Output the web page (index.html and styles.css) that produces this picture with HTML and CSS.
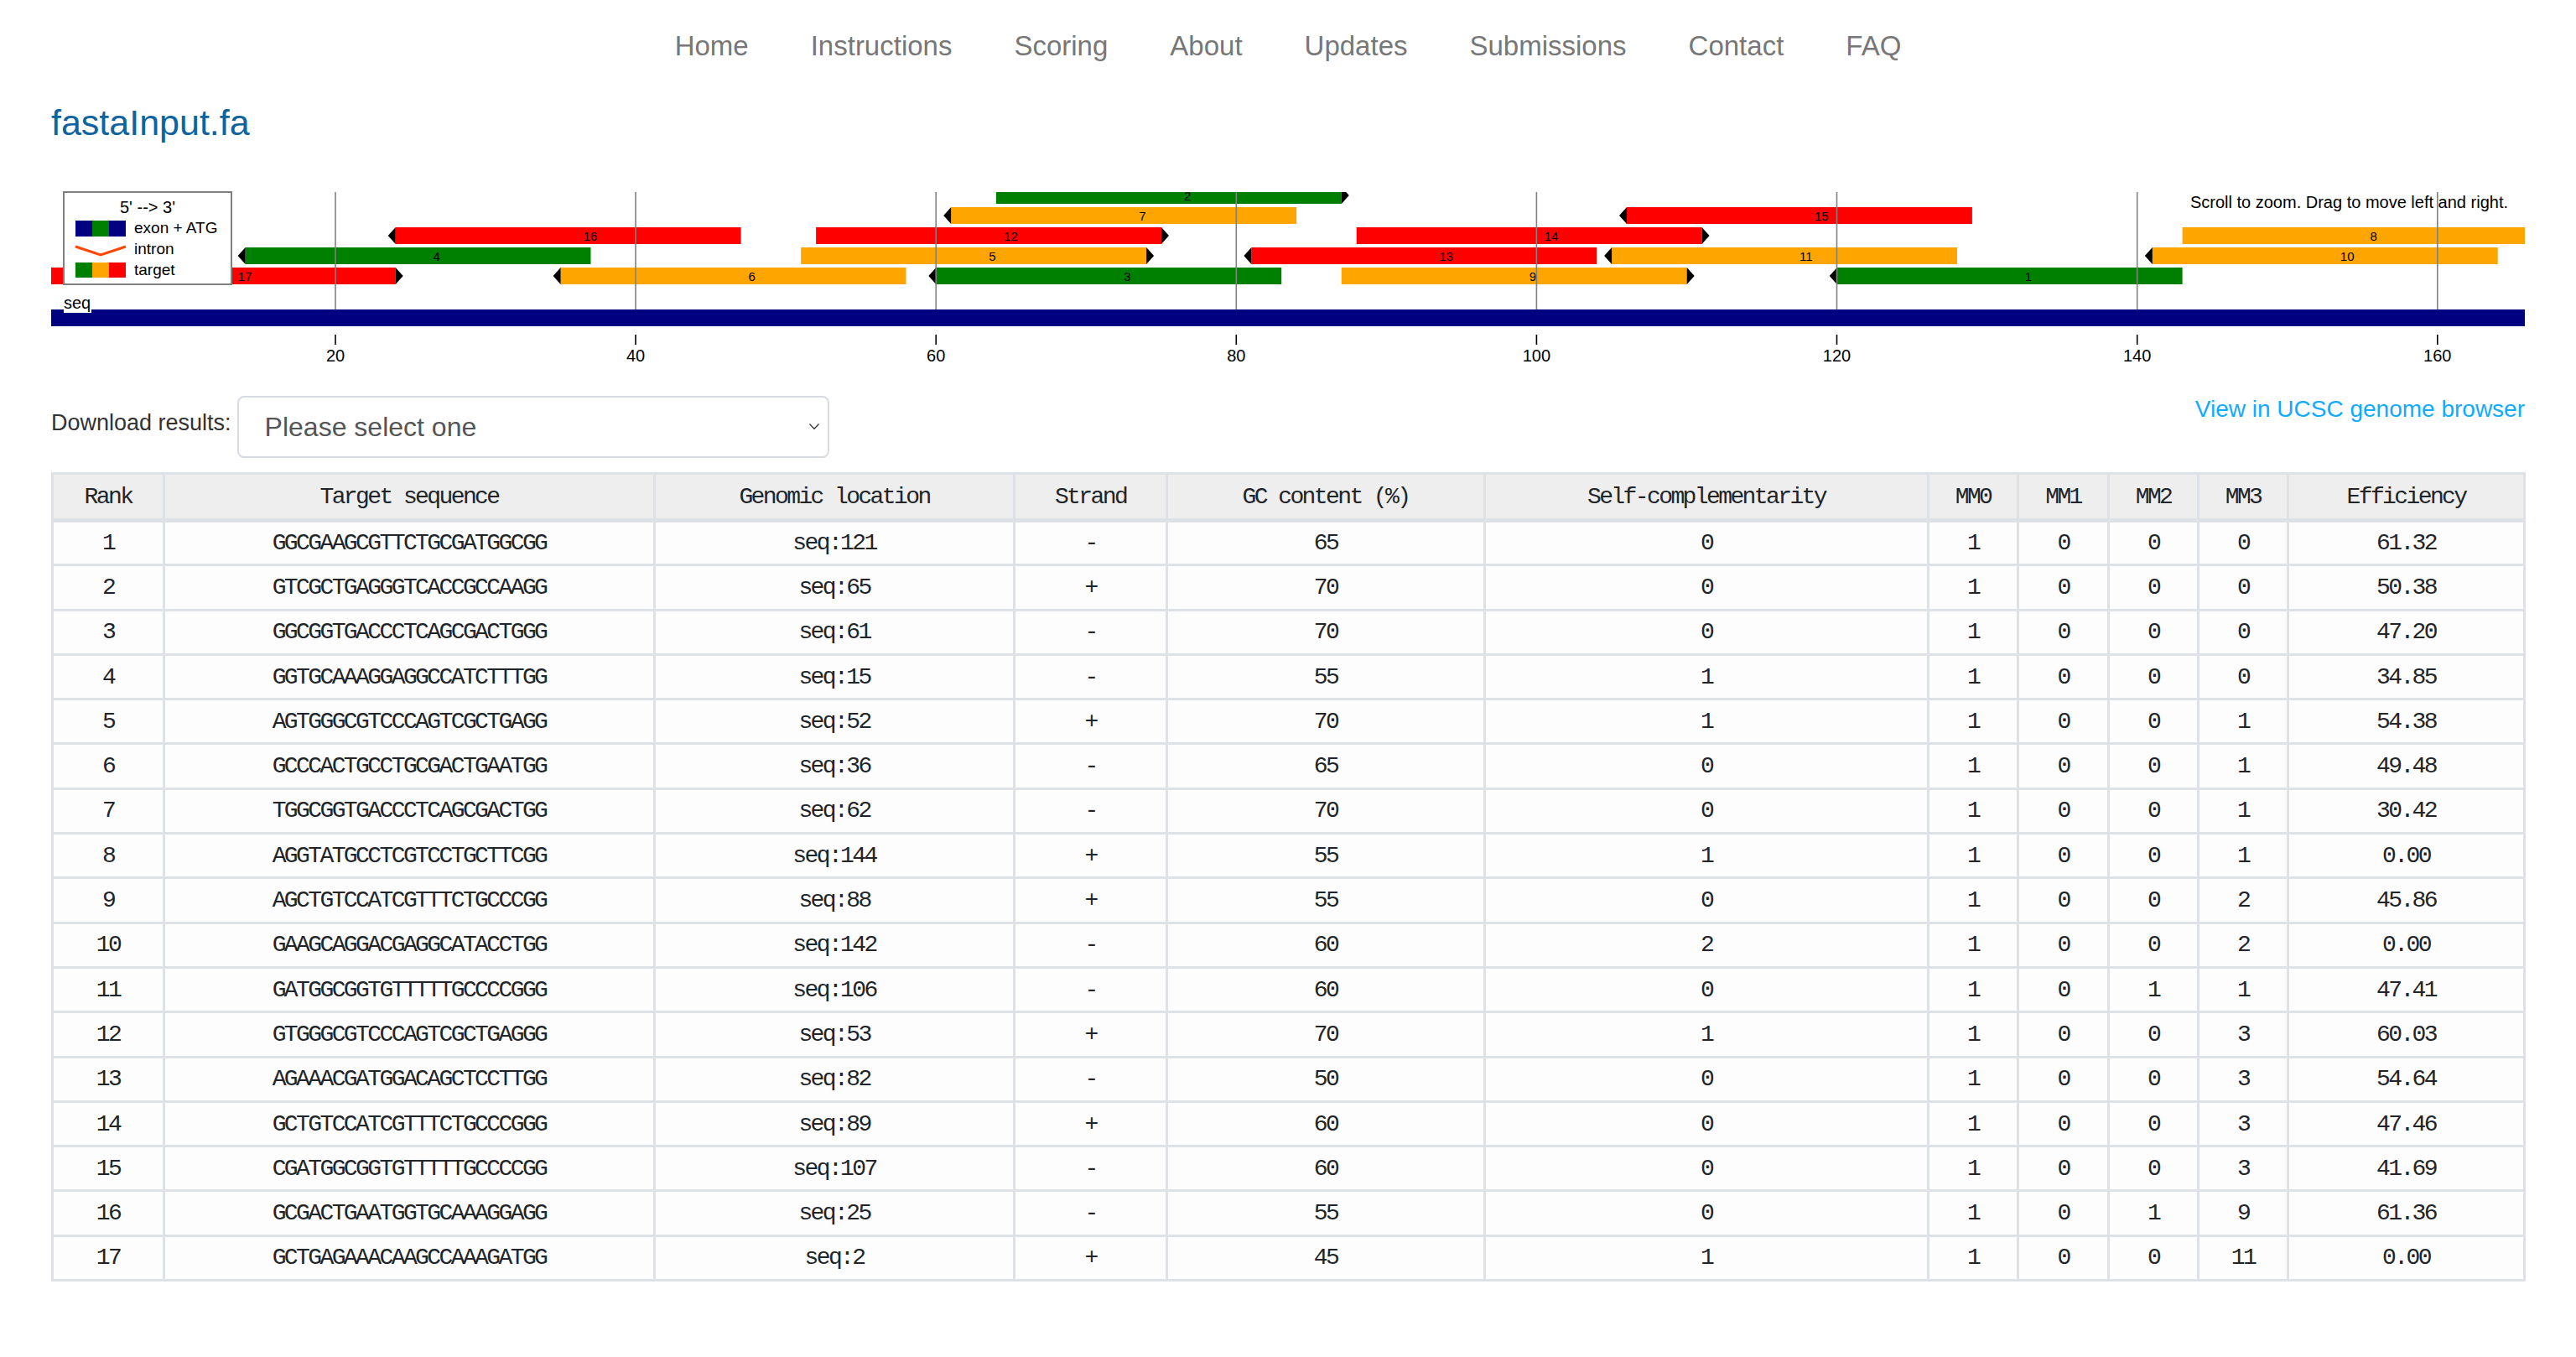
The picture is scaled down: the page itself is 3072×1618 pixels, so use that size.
FILE: index.html
```html
<!DOCTYPE html>
<html lang="en">
<head>
<meta charset="utf-8">
<title>fastaInput.fa</title>
<link rel="stylesheet" href="styles.css">
</head>
<body>
<nav class="nav">
  <a href="#">Home</a>
  <a href="#">Instructions</a>
  <a href="#">Scoring</a>
  <a href="#">About</a>
  <a href="#">Updates</a>
  <a href="#">Submissions</a>
  <a href="#">Contact</a>
  <a href="#">FAQ</a>
</nav>
<main class="container">
  <h1 class="title">fastaInput.fa</h1>

  <svg class="chart" viewBox="61 220 2950 220" xmlns="http://www.w3.org/2000/svg">
    <defs>
      <clipPath id="plot"><rect x="59.8" y="229" width="2954.7" height="200"/></clipPath>
    </defs>
    <rect x="59.8" y="369" width="2954.7" height="20" fill="#000080"/>
    <rect x="76" y="352" width="33" height="21" fill="#fff"/>
    <text class="svgtxt" x="76" y="368" font-size="20">seq</text>

    <g clip-path="url(#plot)" class="svgtxt" font-size="15">
      <!-- row 1 -->
      <rect x="59.8" y="319" width="411.9" height="20" fill="#ff0000"/>
      <polygon points="471.7,319 480.7,329 471.7,339" fill="#000"/>
      <text x="283.8" y="335">17</text>

      <rect x="668.6" y="319" width="411.9" height="20" fill="#ffa500"/>
      <polygon points="668.6,319 659.6,329 668.6,339" fill="#000"/>
      <text x="892.6" y="335">6</text>

      <rect x="1116.3" y="319" width="411.9" height="20" fill="#008000"/>
      <polygon points="1116.3,319 1107.3,329 1116.3,339" fill="#000"/>
      <text x="1340.3" y="335">3</text>

      <rect x="1599.8" y="319" width="411.9" height="20" fill="#ffa500"/>
      <polygon points="2011.7,319 2020.7,329 2011.7,339" fill="#000"/>
      <text x="1823.8" y="335">9</text>

      <rect x="2190.7" y="319" width="411.9" height="20" fill="#008000"/>
      <polygon points="2190.7,319 2181.7,329 2190.7,339" fill="#000"/>
      <text x="2414.7" y="335">1</text>

      <!-- row 2 -->
      <rect x="292.6" y="295" width="411.9" height="20" fill="#008000"/>
      <polygon points="292.6,295 283.6,305 292.6,315" fill="#000"/>
      <text x="516.6" y="311">4</text>

      <rect x="955.2" y="295" width="411.9" height="20" fill="#ffa500"/>
      <polygon points="1367.1,295 1376.1,305 1367.1,315" fill="#000"/>
      <text x="1179.2" y="311">5</text>

      <rect x="1492.4" y="295" width="411.9" height="20" fill="#ff0000"/>
      <polygon points="1492.4,295 1483.4,305 1492.4,315" fill="#000"/>
      <text x="1716.4" y="311">13</text>

      <rect x="1922.1" y="295" width="411.9" height="20" fill="#ffa500"/>
      <polygon points="1922.1,295 1913.1,305 1922.1,315" fill="#000"/>
      <text x="2146.1" y="311">11</text>

      <rect x="2566.8" y="295" width="411.9" height="20" fill="#ffa500"/>
      <polygon points="2566.8,295 2557.8,305 2566.8,315" fill="#000"/>
      <text x="2790.8" y="311">10</text>

      <!-- row 3 -->
      <rect x="471.7" y="271" width="411.9" height="20" fill="#ff0000"/>
      <polygon points="471.7,271 462.7,281 471.7,291" fill="#000"/>
      <text x="695.7" y="287">16</text>

      <rect x="973.1" y="271" width="411.9" height="20" fill="#ff0000"/>
      <polygon points="1385,271 1394,281 1385,291" fill="#000"/>
      <text x="1197.1" y="287">12</text>

      <rect x="1617.7" y="271" width="411.9" height="20" fill="#ff0000"/>
      <polygon points="2029.6,271 2038.6,281 2029.6,291" fill="#000"/>
      <text x="1841.7" y="287">14</text>

      <rect x="2602.6" y="271" width="411.9" height="20" fill="#ffa500"/>
      <polygon points="3014.5,271 3023.5,281 3014.5,291" fill="#000"/>
      <text x="2826.6" y="287">8</text>

      <!-- row 4 -->
      <rect x="1134.2" y="247" width="411.9" height="20" fill="#ffa500"/>
      <polygon points="1134.2,247 1125.2,257 1134.2,267" fill="#000"/>
      <text x="1358.2" y="263">7</text>

      <rect x="1940" y="247" width="411.9" height="20" fill="#ff0000"/>
      <polygon points="1940,247 1931,257 1940,267" fill="#000"/>
      <text x="2164" y="263">15</text>

      <!-- row 5 -->
      <rect x="1187.9" y="223" width="411.9" height="20" fill="#008000"/>
      <polygon points="1599.8,223 1608.8,233 1599.8,243" fill="#000"/>
      <text x="1411.9" y="239">2</text>
    </g>

    <g stroke="#808080" stroke-width="1.6">
      <line x1="400" y1="229" x2="400" y2="369"/>
      <line x1="758" y1="229" x2="758" y2="369"/>
      <line x1="1116.2" y1="229" x2="1116.2" y2="369"/>
      <line x1="1474.3" y1="229" x2="1474.3" y2="369"/>
      <line x1="1832.4" y1="229" x2="1832.4" y2="369"/>
      <line x1="2190.5" y1="229" x2="2190.5" y2="369"/>
      <line x1="2548.7" y1="229" x2="2548.7" y2="369"/>
      <line x1="2906.8" y1="229" x2="2906.8" y2="369"/>
    </g>

    <g stroke="#000" stroke-width="1.6">
      <line x1="400" y1="399" x2="400" y2="411"/>
      <line x1="758" y1="399" x2="758" y2="411"/>
      <line x1="1116.2" y1="399" x2="1116.2" y2="411"/>
      <line x1="1474.3" y1="399" x2="1474.3" y2="411"/>
      <line x1="1832.4" y1="399" x2="1832.4" y2="411"/>
      <line x1="2190.5" y1="399" x2="2190.5" y2="411"/>
      <line x1="2548.7" y1="399" x2="2548.7" y2="411"/>
      <line x1="2906.8" y1="399" x2="2906.8" y2="411"/>
    </g>
    <g class="svgtxt" font-size="20" fill="#222" text-anchor="middle">
      <text x="400" y="431">20</text>
      <text x="758" y="431">40</text>
      <text x="1116.2" y="431">60</text>
      <text x="1474.3" y="431">80</text>
      <text x="1832.4" y="431">100</text>
      <text x="2190.5" y="431">120</text>
      <text x="2548.7" y="431">140</text>
      <text x="2906.8" y="431">160</text>
    </g>

    <text class="svgtxt" x="2991" y="248" font-size="20" text-anchor="end">Scroll to zoom. Drag to move left and right.</text>

    <g class="legend">
      <rect x="76" y="229" width="200" height="110" fill="#fff" stroke="#808080" stroke-width="2"/>
      <text class="svgtxt" x="176" y="254" font-size="20" text-anchor="middle">5' --&gt; 3'</text>
      <rect x="90" y="263" width="20" height="19" fill="#000080"/>
      <rect x="110" y="263" width="20" height="19" fill="#008000"/>
      <rect x="130" y="263" width="20" height="19" fill="#000080"/>
      <text class="svgtxt" x="160" y="278" font-size="19">exon + ATG</text>
      <polyline points="90,294 120,304 150,294" fill="none" stroke="#ff4500" stroke-width="3"/>
      <text class="svgtxt" x="160" y="303" font-size="19">intron</text>
      <rect x="90" y="313" width="20" height="18" fill="#008000"/>
      <rect x="110" y="313" width="20" height="18" fill="#ffa500"/>
      <rect x="130" y="313" width="20" height="18" fill="#ff0000"/>
      <text class="svgtxt" x="160" y="328" font-size="19">target</text>
    </g>
  </svg>

  <div class="toolbar">
    <div class="download">
      <span class="download-label">Download results:</span>
      <div class="select-wrap">
        <select class="select">
          <option>Please select one</option>
          <option>CSV</option>
          <option>Tab-delimited</option>
        </select>
        <svg class="chev" viewBox="0 0 12 7" xmlns="http://www.w3.org/2000/svg"><polyline points="0.5,0.5 6,6.3 11.5,0.5" fill="none" stroke="#333" stroke-width="1.3"/></svg>
      </div>
    </div>
    <a class="ucsc" href="#">View in UCSC genome browser</a>
  </div>

  <table class="results">
    <colgroup>
      <col class="c-rank"><col class="c-seq"><col class="c-loc"><col class="c-strand"><col class="c-gc"><col class="c-self"><col class="c-mm"><col class="c-mm1"><col class="c-mm"><col class="c-mm"><col class="c-eff">
    </colgroup>
    <thead>
      <tr><th>Rank</th><th>Target sequence</th><th>Genomic location</th><th>Strand</th><th>GC content (%)</th><th>Self-complementarity</th><th>MM0</th><th>MM1</th><th>MM2</th><th>MM3</th><th>Efficiency</th></tr>
    </thead>
    <tbody>
      <tr><td>1</td><td>GGCGAAGCGTTCTGCGATGGCGG</td><td>seq:121</td><td>-</td><td>65</td><td>0</td><td>1</td><td>0</td><td>0</td><td>0</td><td>61.32</td></tr>
      <tr><td>2</td><td>GTCGCTGAGGGTCACCGCCAAGG</td><td>seq:65</td><td>+</td><td>70</td><td>0</td><td>1</td><td>0</td><td>0</td><td>0</td><td>50.38</td></tr>
      <tr><td>3</td><td>GGCGGTGACCCTCAGCGACTGGG</td><td>seq:61</td><td>-</td><td>70</td><td>0</td><td>1</td><td>0</td><td>0</td><td>0</td><td>47.20</td></tr>
      <tr><td>4</td><td>GGTGCAAAGGAGGCCATCTTTGG</td><td>seq:15</td><td>-</td><td>55</td><td>1</td><td>1</td><td>0</td><td>0</td><td>0</td><td>34.85</td></tr>
      <tr><td>5</td><td>AGTGGGCGTCCCAGTCGCTGAGG</td><td>seq:52</td><td>+</td><td>70</td><td>1</td><td>1</td><td>0</td><td>0</td><td>1</td><td>54.38</td></tr>
      <tr><td>6</td><td>GCCCACTGCCTGCGACTGAATGG</td><td>seq:36</td><td>-</td><td>65</td><td>0</td><td>1</td><td>0</td><td>0</td><td>1</td><td>49.48</td></tr>
      <tr><td>7</td><td>TGGCGGTGACCCTCAGCGACTGG</td><td>seq:62</td><td>-</td><td>70</td><td>0</td><td>1</td><td>0</td><td>0</td><td>1</td><td>30.42</td></tr>
      <tr><td>8</td><td>AGGTATGCCTCGTCCTGCTTCGG</td><td>seq:144</td><td>+</td><td>55</td><td>1</td><td>1</td><td>0</td><td>0</td><td>1</td><td>0.00</td></tr>
      <tr><td>9</td><td>AGCTGTCCATCGTTTCTGCCCGG</td><td>seq:88</td><td>+</td><td>55</td><td>0</td><td>1</td><td>0</td><td>0</td><td>2</td><td>45.86</td></tr>
      <tr><td>10</td><td>GAAGCAGGACGAGGCATACCTGG</td><td>seq:142</td><td>-</td><td>60</td><td>2</td><td>1</td><td>0</td><td>0</td><td>2</td><td>0.00</td></tr>
      <tr><td>11</td><td>GATGGCGGTGTTTTTGCCCCGGG</td><td>seq:106</td><td>-</td><td>60</td><td>0</td><td>1</td><td>0</td><td>1</td><td>1</td><td>47.41</td></tr>
      <tr><td>12</td><td>GTGGGCGTCCCAGTCGCTGAGGG</td><td>seq:53</td><td>+</td><td>70</td><td>1</td><td>1</td><td>0</td><td>0</td><td>3</td><td>60.03</td></tr>
      <tr><td>13</td><td>AGAAACGATGGACAGCTCCTTGG</td><td>seq:82</td><td>-</td><td>50</td><td>0</td><td>1</td><td>0</td><td>0</td><td>3</td><td>54.64</td></tr>
      <tr><td>14</td><td>GCTGTCCATCGTTTCTGCCCGGG</td><td>seq:89</td><td>+</td><td>60</td><td>0</td><td>1</td><td>0</td><td>0</td><td>3</td><td>47.46</td></tr>
      <tr><td>15</td><td>CGATGGCGGTGTTTTTGCCCCGG</td><td>seq:107</td><td>-</td><td>60</td><td>0</td><td>1</td><td>0</td><td>0</td><td>3</td><td>41.69</td></tr>
      <tr><td>16</td><td>GCGACTGAATGGTGCAAAGGAGG</td><td>seq:25</td><td>-</td><td>55</td><td>0</td><td>1</td><td>0</td><td>1</td><td>9</td><td>61.36</td></tr>
      <tr><td>17</td><td>GCTGAGAAACAAGCCAAAGATGG</td><td>seq:2</td><td>+</td><td>45</td><td>1</td><td>1</td><td>0</td><td>0</td><td>11</td><td>0.00</td></tr>
    </tbody>
  </table>
</main>
</body>
</html>
```

FILE: styles.css
```css
* { box-sizing: border-box; }

body {
  margin: 0;
  background: #fff;
  color: #333;
  font-family: "Liberation Sans", Arial, sans-serif;
}

.nav {
  display: flex;
  justify-content: center;
  gap: 74px;
  padding-top: 36px;
}

.nav a {
  font-size: 33px;
  line-height: 38px;
  color: #777;
  text-decoration: none;
}

.container {
  padding: 0 61px;
}

.title {
  margin: 48px 0 0;
  font-size: 43px;
  line-height: 49px;
  font-weight: normal;
  color: #0d64a0;
}

.chart {
  display: block;
  margin-top: 49px;
  width: 2950px;
  height: 220px;
}

.svgtxt {
  font-family: "Liberation Sans", Arial, sans-serif;
  fill: #000;
}

.toolbar {
  display: flex;
  justify-content: space-between;
  align-items: flex-start;
  margin-top: 32px;
}

.download {
  display: flex;
  align-items: flex-start;
}

.download-label {
  font-size: 27px;
  line-height: 31px;
  margin-top: 17px;
  margin-right: 7px;
  color: #333;
}

.select-wrap {
  position: relative;
}

.select {
  appearance: none;
  -webkit-appearance: none;
  display: block;
  width: 706px;
  height: 74px;
  border: 2px solid #d8dce1;
  border-radius: 8px;
  padding: 0 0 0 31px;
  background: #fff;
  font-family: "Liberation Sans", Arial, sans-serif;
  font-size: 32px;
  color: #555;
}

.chev {
  position: absolute;
  right: 12px;
  top: 33px;
  width: 12px;
  height: 7px;
}

.ucsc {
  font-size: 28px;
  line-height: 31px;
  color: #10aaff;
  text-decoration: none;
}

.results {
  margin-top: 17px;
  width: 100%;
  border-collapse: collapse;
  table-layout: fixed;
}

.c-rank { width: 133px; }
.c-seq { width: 585px; }
.c-loc { width: 429px; }
.c-strand { width: 182px; }
.c-gc { width: 379px; }
.c-self { width: 529px; }
.c-mm { width: 107px; }
.c-mm1 { width: 108px; }
.c-eff { width: 282px; }

.results th,
.results td {
  border: 3px solid #dee2e6;
  padding: 0;
  text-align: center;
  font-family: "Liberation Mono", "Courier New", monospace;
  font-size: 28px;
  letter-spacing: -2.6px;
  color: #212529;
  white-space: nowrap;
}

.results th {
  height: 56px;
  background: #eeeeee;
  font-weight: normal;
  border-bottom-width: 5px;
}

.results td {
  height: 53.3px;
  background: #fdfdfd;
}
```
